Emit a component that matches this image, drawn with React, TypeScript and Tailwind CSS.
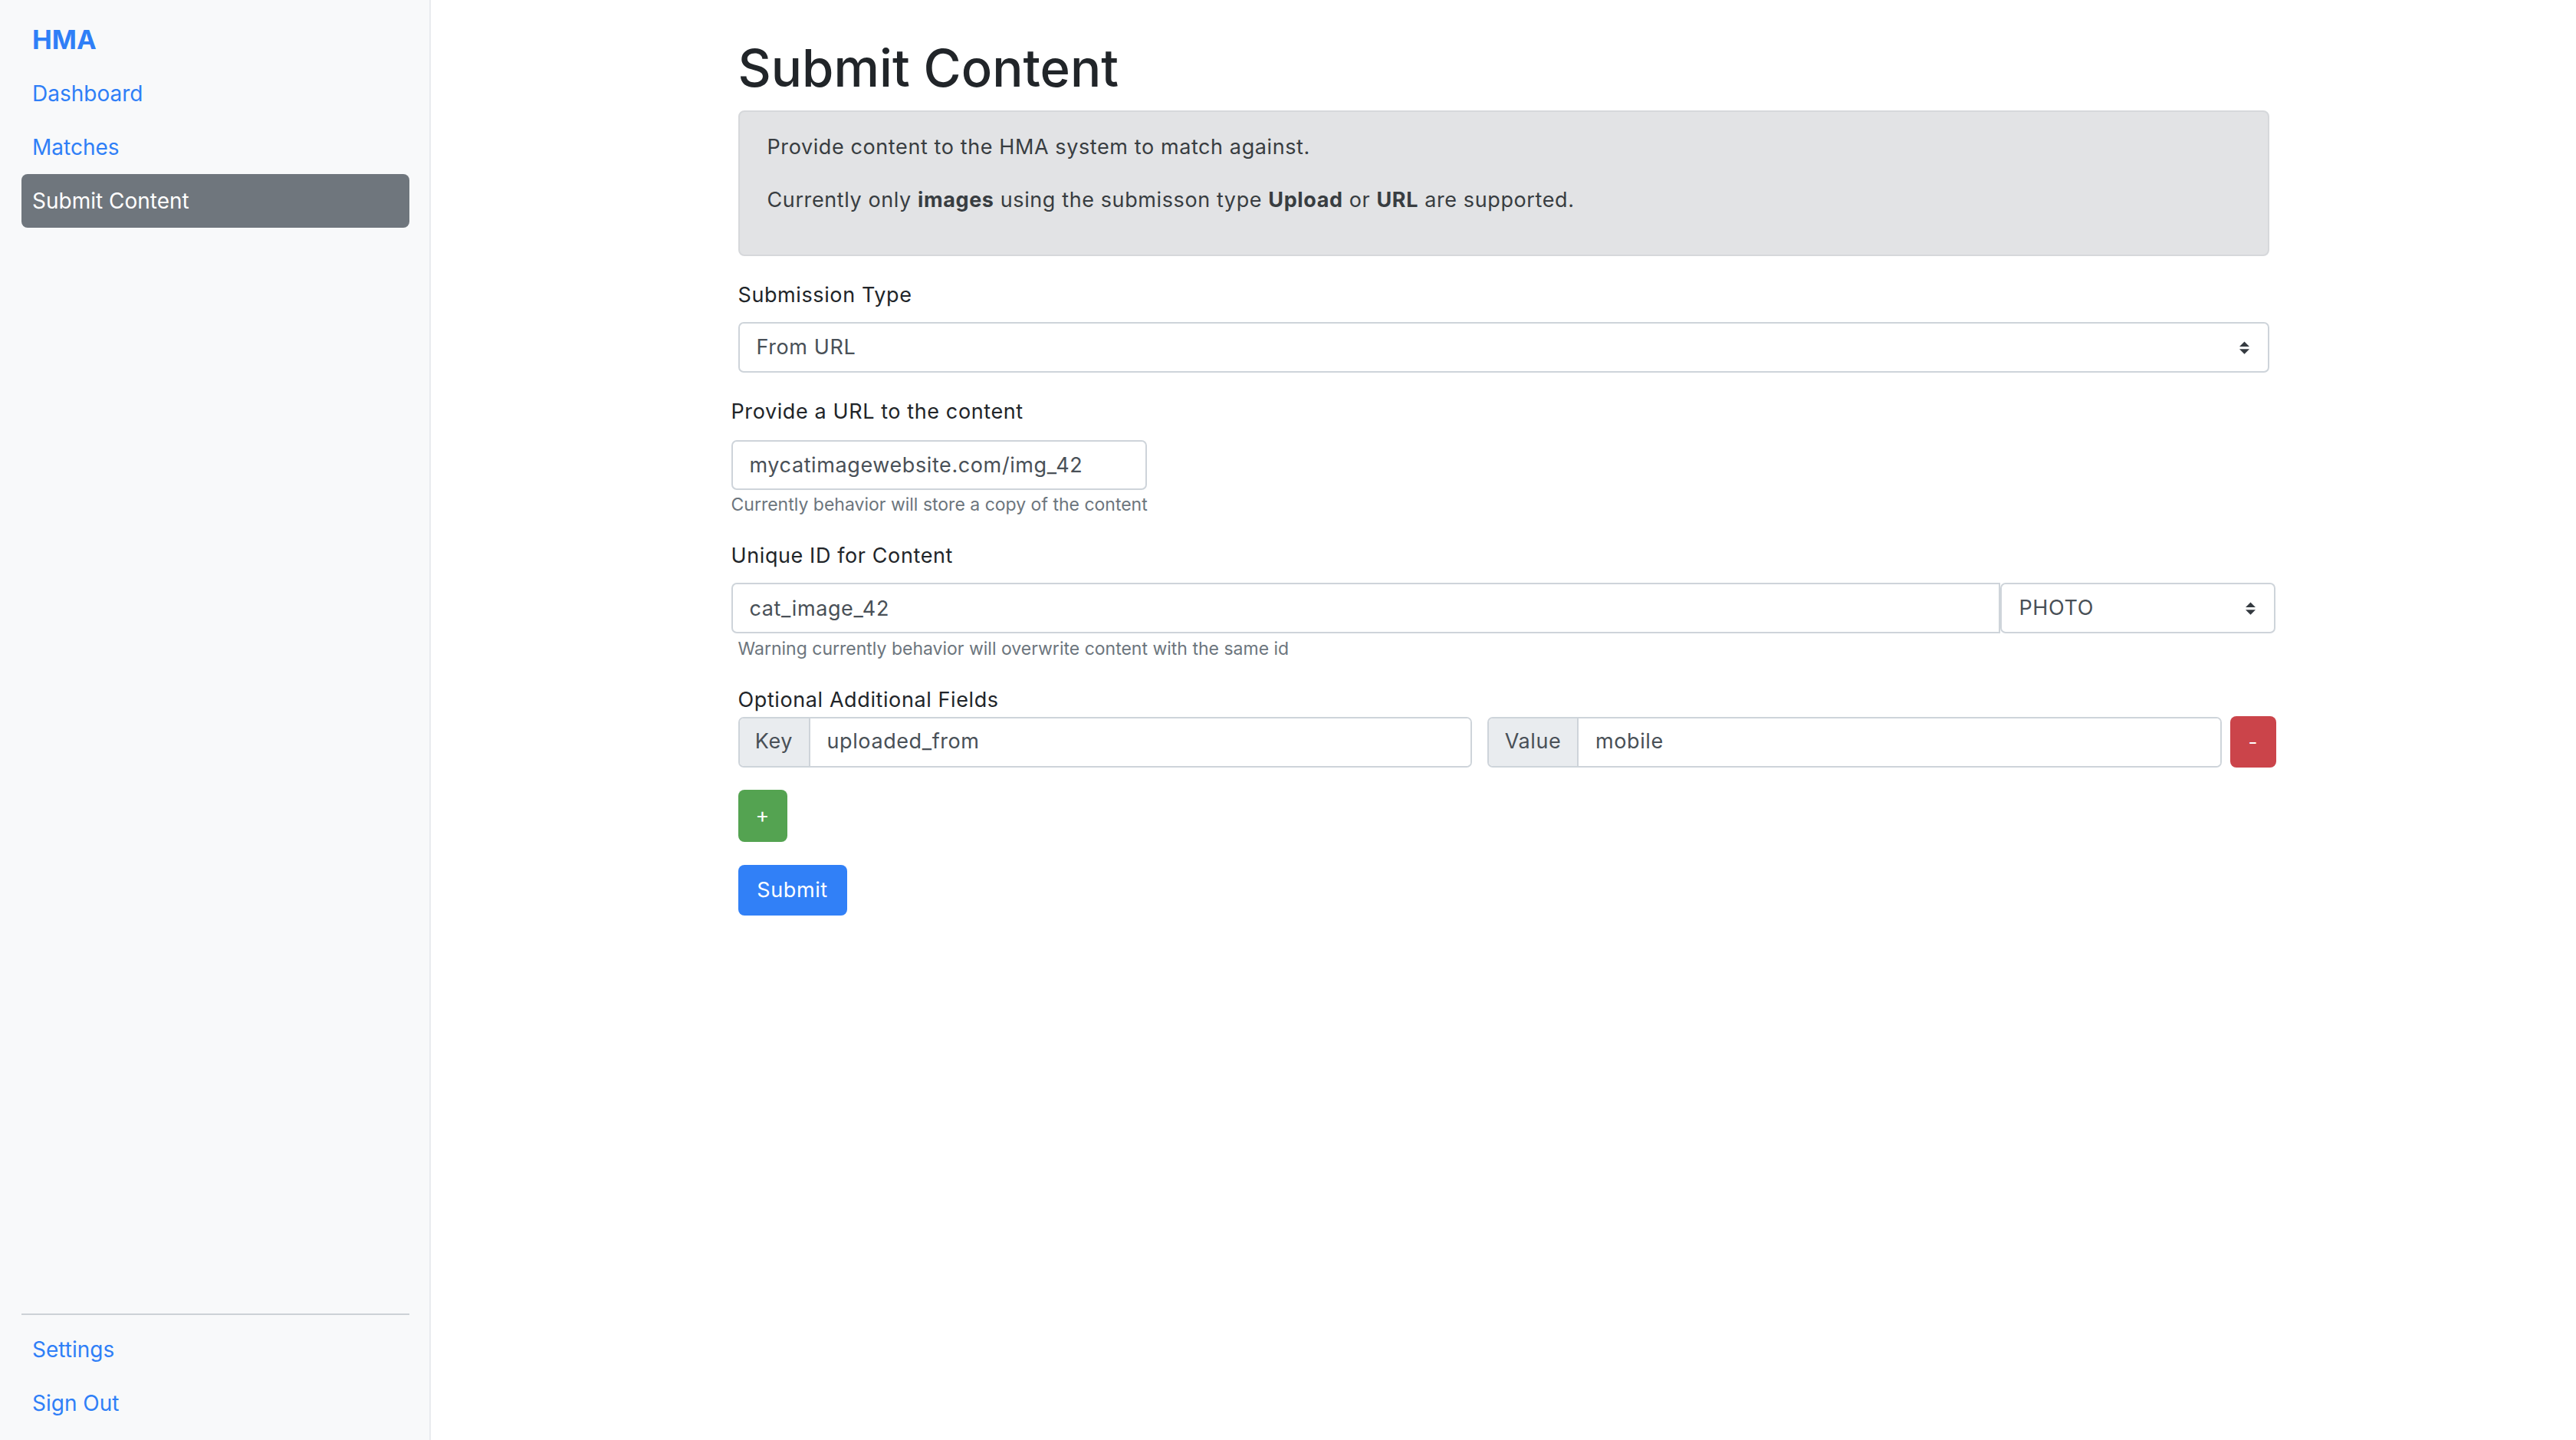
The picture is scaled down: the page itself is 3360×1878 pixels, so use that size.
import React from 'react';

const BLUE = 'text-[#2f7ff7]';
const BODY = 'text-[27px] tracking-[0.6px]';

function SelectBox({ value, className }: { value: string; className?: string }) {
  return (
    <div
      className={`flex items-center justify-between h-[66px] border-2 border-[#ced4da] bg-white pl-[22px] pr-[24px] ${BODY} text-[#495057] ${className || ''}`}
    >
      <span>{value}</span>
      <svg width="13" height="17" viewBox="0 0 4 5" className="shrink-0">
        <path d="M2 0L0 2h4zm0 5L0 3h4z" fill="#343a40" />
      </svg>
    </div>
  );
}

function NavItem({ label, active }: { label: string; active?: boolean }) {
  return (
    <div
      className={`flex items-center h-[70px] pl-[14px] text-[28px] rounded-[8px] ${
        active ? 'bg-[#6f767d] text-white' : BLUE
      }`}
    >
      {label}
    </div>
  );
}

function AddonInput({ addon, value, addonWidth }: { addon: string; value: string; addonWidth: string }) {
  return (
    <div className={`flex flex-1 h-[66px] border-2 border-[#ced4da] rounded-[7px] overflow-hidden ${BODY} text-[#495057]`}>
      <div className={`flex items-center justify-center bg-[#e9ecef] border-r-2 border-[#ced4da] ${addonWidth}`}>
        {addon}
      </div>
      <input
        defaultValue={value}
        className={`flex-1 min-w-0 px-[22px] bg-white text-[#495057] outline-none ${BODY}`}
      />
    </div>
  );
}

export default function App() {
  return (
    <div className="flex min-h-screen bg-white font-['Inter',sans-serif] text-[#212529]">
      {/* Sidebar */}
      <aside className="flex flex-col w-[562px] shrink-0 min-h-screen bg-[#f8f9fa] border-r-2 border-[#e9ebee] pl-[28px] pr-[26px] pb-[13px]">
        <div className={`pt-[24px] pl-[14px] mb-[8px] text-[34.5px] leading-[55px] font-bold ${BLUE}`}>HMA</div>
        <nav className="flex flex-col">
          <NavItem label="Dashboard" />
          <NavItem label="Matches" />
          <NavItem label="Submit Content" active />
        </nav>
        <div className="flex-1" />
        <div className="border-t-2 border-[#ccd1d6] mb-[10px]" />
        <NavItem label="Settings" />
        <NavItem label="Sign Out" />
      </aside>

      {/* Main */}
      <main className="flex-1">
        <div className="w-[1997px] mx-auto">
          <h1 className="pt-[46px] mb-[13px] text-[67px] leading-[85px] font-medium">Submit Content</h1>

          <div className={`bg-[#e2e3e5] border-2 border-[#d6d8db] rounded-[8px] px-[36px] pt-[26px] pb-[26px] ${BODY} leading-[40px] text-[#383d41]`}>
            <p className="mb-[29px]">Provide content to the HMA system to match against.</p>
            <p className="mb-[25px]">
              Currently only <b className="font-bold">images</b> using the submisson type{' '}
              <b className="font-bold">Upload</b> or <b className="font-bold">URL</b> are supported.
            </p>
          </div>

          <div className={`mt-[31px] ${BODY} leading-[40px]`}>Submission Type</div>
          <SelectBox value="From URL" className="mt-[15px] rounded-[7px]" />

          <div className="-ml-[9px]">
            <div className={`mt-[31px] ${BODY} leading-[40px]`}>Provide a URL to the content</div>
            <input
              defaultValue="mycatimagewebsite.com/img_42"
              className={`mt-[17px] block w-[542px] h-[65px] border-2 border-[#ced4da] rounded-[7px] px-[22px] ${BODY} text-[#495057] outline-none`}
            />
            <div className="mt-[2px] text-[23px] leading-[34px] text-[#6c757d]">
              Currently behavior will store a copy of the content
            </div>

            <div className={`mt-[30px] ${BODY} leading-[40px]`}>Unique ID for Content</div>
            <div className="mt-[15px] flex w-[2014px]">
              <input
                defaultValue="cat_image_42"
                className={`flex-1 min-w-0 h-[66px] border-2 border-[#ced4da] rounded-l-[7px] px-[22px] ${BODY} text-[#495057] outline-none`}
              />
              <SelectBox value="PHOTO" className="w-[359px] rounded-[7px] pl-[23px] pr-[22px]" />
            </div>
          </div>
          <div className="mt-[3px] text-[23px] leading-[34px] text-[#6c757d]">
            Warning currently behavior will overwrite content with the same id
          </div>

          <div className={`mt-[30px] ${BODY} leading-[40px]`}>Optional Additional Fields</div>
          <div className="mt-[1px] flex items-center w-[2006px]">
            <AddonInput addon="Key" value="uploaded_from" addonWidth="w-[92px]" />
            <div className="w-[20px]" />
            <AddonInput addon="Value" value="mobile" addonWidth="w-[117px]" />
            <button className="ml-[11px] w-[60px] h-[67px] rounded-[8px] bg-[#cb444a] text-white text-[26px]">-</button>
          </div>

          <button className="mt-[29px] block w-[64px] h-[68px] rounded-[8px] bg-[#54a351] text-white text-[27px]">+</button>
          <button className={`mt-[30px] block w-[142px] h-[66px] rounded-[8px] bg-[#3180f7] text-white ${BODY}`}>
            Submit
          </button>
        </div>
      </main>
    </div>
  );
}
